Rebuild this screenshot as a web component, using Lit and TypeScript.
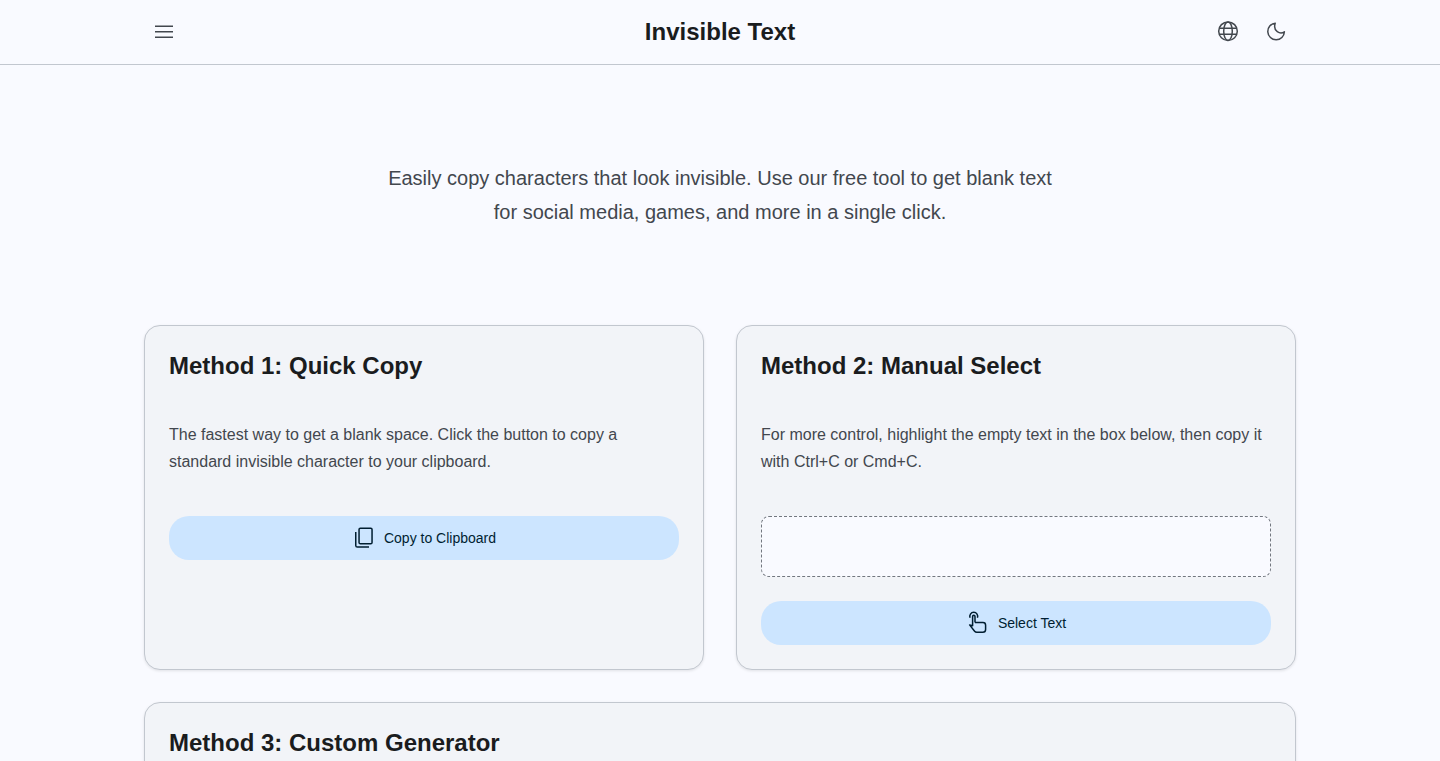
import { LitElement, html, css, svg } from "lit";
import { customElement } from "lit/decorators.js";

const icon = (body: unknown) => html`
  <svg class="icon" viewBox="0 0 24 24" width="24" height="24" fill="none" stroke="currentColor" stroke-width="1.5" aria-hidden="true">${body}</svg>
`;

const menuIcon = svg`<path d="M3 6.25h18M3 11.75h18M3 17.25h18" />`;
const globeIcon = svg`
  <circle cx="12" cy="11.2" r="9.3" />
  <ellipse cx="12" cy="11.2" rx="4.3" ry="9.3" />
  <path d="M3.3 8.3h17.4M3.3 14.2h17.4" />`;
const moonIcon = svg`<path stroke-linejoin="round" d="M11.2 3.2A8.3 8.3 0 1 0 20.4 11.8C16.3 14.8 8.6 11.4 11.2 3.2Z" />`;
const copyIcon = svg`
  <rect x="7.05" y="2.25" width="13" height="15.5" rx="1.3" />
  <path d="M3.75 6v13.4q0 1.6 1.6 1.6H17" />`;
const touchIcon = svg`
  <path d="M4.1 6.8A3.95 3.95 0 1 1 11.4 6.8" />
  <path stroke-linejoin="round" d="M9 11.6V5.4a1.2 1.2 0 0 0-2.4 0v9.4l-3-.9 5 6.3q.9 1.1 2.2 1.1h6q2.8 0 2.8-2.8v-4.3q0-2.6-2.6-2.6H9" />`;

@customElement("app-root")
export class AppRoot extends LitElement {
  static styles = css`
    :host {
      display: block;
      min-height: 100vh;
      background: #f9faff;
      color: #1a1c1e;
      font-family: "Liberation Sans", Arial, sans-serif;
      font-size: 16px;
      line-height: 27px;
    }
    * {
      box-sizing: border-box;
    }
    h1,
    h2,
    p {
      margin: 0;
    }
    .header {
      position: sticky;
      top: 0;
      z-index: 10;
      background: #f9faff;
      border-bottom: 1px solid #c2c7cf;
    }
    .container {
      width: 80%;
      max-width: 1200px;
      margin: 0 auto;
    }
    .bar {
      display: grid;
      grid-template-columns: 1fr auto 1fr;
      align-items: center;
      height: 64px;
    }
    .title {
      font-size: 24px;
      line-height: 32px;
      font-weight: 700;
    }
    .heading {
      font-size: 24px;
      line-height: 31px;
      font-weight: 700;
    }
    .actions {
      display: flex;
      justify-content: flex-end;
      gap: 8px;
    }
    .icon-button {
      display: flex;
      padding: 8px;
      border: 0;
      border-radius: 50%;
      background: none;
      color: #42474e;
      cursor: pointer;
    }
    .icon {
      display: block;
      flex: none;
    }
    .hero {
      max-width: 680px;
      margin: 0 auto;
      padding: 96px 0;
      color: #42474e;
      font-size: 20px;
      line-height: 34px;
      text-align: center;
    }
    .cards {
      display: grid;
      grid-template-columns: 1fr 1fr;
      gap: 32px;
      padding-bottom: 32px;
    }
    .card {
      padding: 24px;
      border: 1px solid #c2c7cf;
      border-radius: 16px;
      background: #f2f4f8;
      box-shadow: 0 1px 3px #0000001a;
    }
    .wide {
      grid-column: 1 / -1;
    }
    .text {
      margin: 40px 0 41px;
      color: #42474e;
    }
    .box {
      display: block;
      width: 100%;
      height: 61px;
      margin-bottom: 24px;
      padding: 16px;
      border: 1px dashed #72777f;
      border-radius: 8px;
      background: #f9faff;
      color: inherit;
      font: inherit;
      resize: none;
      overflow: hidden;
    }
    .button {
      display: flex;
      align-items: center;
      justify-content: center;
      gap: 8px;
      width: 100%;
      padding: 10px 24px;
      border: 0;
      border-radius: 20px;
      background: #cce5ff;
      color: #001e31;
      font-family: inherit;
      font-size: 14px;
      line-height: 24px;
      cursor: pointer;
    }
  `;

  private copyBlank() {
    navigator.clipboard?.writeText("\u3164");
  }

  private selectBlank() {
    this.renderRoot.querySelector<HTMLTextAreaElement>(".box")?.select();
  }

  render() {
    return html`
      <header class="header">
        <div class="container bar">
          <nav>
            <button class="icon-button" aria-label="Menu">${icon(menuIcon)}</button>
          </nav>
          <h1 class="title">Invisible Text</h1>
          <div class="actions">
            <button class="icon-button" aria-label="Language">${icon(globeIcon)}</button>
            <button class="icon-button" aria-label="Dark theme">${icon(moonIcon)}</button>
          </div>
        </div>
      </header>
      <main class="container">
        <p class="hero">
          Easily copy characters that look invisible. Use our free tool to get blank text for social media, games, and
          more in a single click.
        </p>
        <div class="cards">
          <section class="card">
            <h2 class="heading">Method 1: Quick Copy</h2>
            <p class="text">
              The fastest way to get a blank space. Click the button to copy a standard invisible character to your
              clipboard.
            </p>
            <button class="button" @click=${this.copyBlank}>${icon(copyIcon)}Copy to Clipboard</button>
          </section>
          <section class="card">
            <h2 class="heading">Method 2: Manual Select</h2>
            <p class="text">
              For more control, highlight the empty text in the box below, then copy it with Ctrl+C or Cmd+C.
            </p>
            <textarea class="box" readonly aria-label="Invisible text" .value=${"\u00a0"}></textarea>
            <button class="button" @click=${this.selectBlank}>${icon(touchIcon)}Select Text</button>
          </section>
          <section class="card wide">
            <h2 class="heading">Method 3: Custom Generator</h2>
          </section>
        </div>
      </main>
    `;
  }
}
